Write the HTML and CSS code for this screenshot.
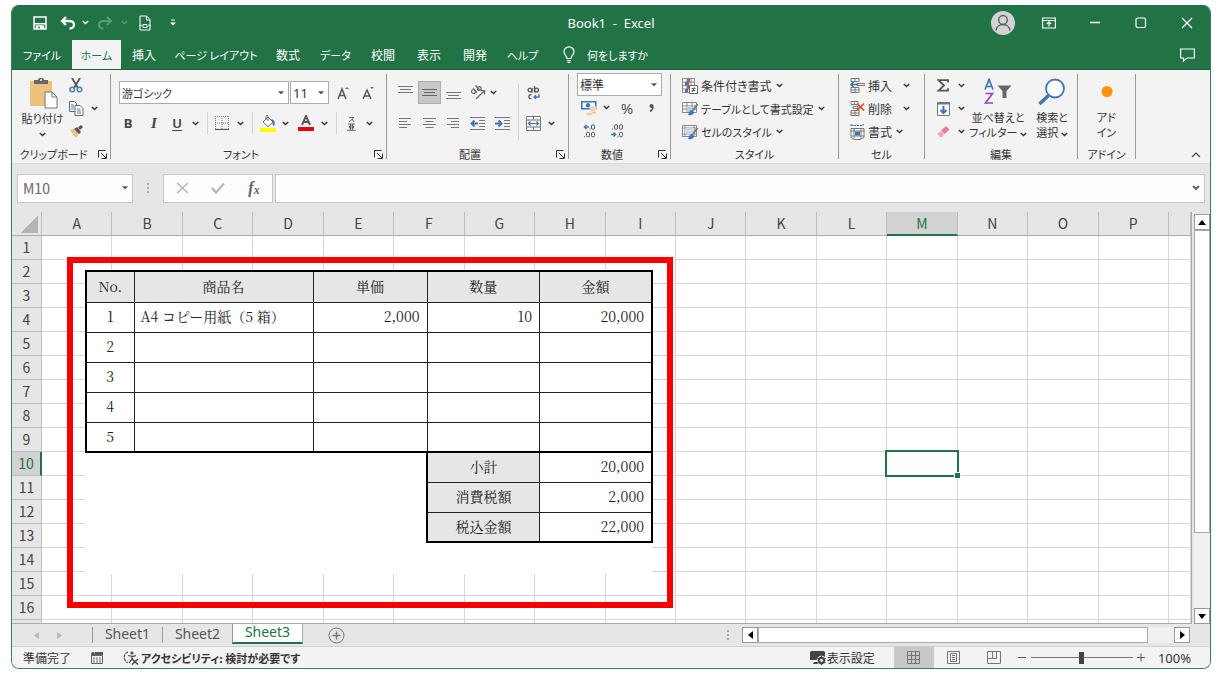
FILE: index.html
```html
<!DOCTYPE html>
<html lang="ja">
<head>
<meta charset="utf-8">
<title>Book1 - Excel</title>
<link rel="stylesheet" href="styles.css">
</head>
<body>
<svg class="defs" aria-hidden="true">
  <symbol id="chev" viewBox="0 0 7 5"><path d="M.8 1l2.7 2.6L6.200 1" fill="none" stroke="currentColor" stroke-width="1.400"/></symbol>
  <symbol id="tri" viewBox="0 0 6 4"><path d="M0 .3h6L3 3.600z" fill="currentColor"/></symbol>
  <symbol id="launch" viewBox="0 0 9 9"><path d="M.5 7.500v-7h7M3 3l5 5M8.500 3.500v5h-5" fill="none" stroke="currentColor"/></symbol>
  <symbol id="dots" viewBox="0 0 4 12"><path d="M1 1h2v2H1zM1 5h2v2H1zM1 9h2v2H1z" fill="currentColor"/></symbol>
</svg>
<div class="window">
  <header class="titlebar">
    <div class="quick">
      <button class="ib" aria-label="上書き保存"><svg width="14" height="14" viewBox="0 0 14 14" fill="none" stroke="#fff" stroke-width="1.500"><path d="M1 1h12v12H1zM1 7.800h12"/><path d="M3.500 13v-3h7v3" fill="#fff"/><path d="M6 10.500v2" stroke="#217346"/></svg></button>
      <button class="ib" aria-label="元に戻す"><svg width="16" height="14" viewBox="0 0 16 14" fill="none" stroke="#fff" stroke-width="2.300"><path d="M6 1L2 5l4 4M2 5h7.500c6 0 6 7.500 0 7.500"/></svg></button>
      <button class="ib" aria-label="元に戻すの一覧"><svg class="chev"><use href="#chev"/></svg></button>
      <button class="ib dim" aria-label="やり直し"><svg width="16" height="14" viewBox="0 0 16 14" fill="none" stroke="currentColor" stroke-width="2"><path d="M10 1l4 4-4 4M14 5H6.500c-6 0-6 7.500 0 7.500"/></svg></button>
      <button class="ib dim" aria-label="やり直しの一覧"><svg class="chev"><use href="#chev"/></svg></button>
      <button class="ib" aria-label="印刷プレビュー"><svg width="12" height="16" viewBox="0 0 12 16" fill="none" stroke="#fff"><path d="M1 9V1h6.500L11 4.500V9M7.500 1v4H11M1 12v3h10v-3"/><path d="M4 9.500h4v3H4z"/><path d="M0 10.500h2.500M9.500 10.500H12" stroke-width="2"/></svg></button>
      <button class="ib" aria-label="クイック アクセスの設定"><svg width="6" height="7" viewBox="0 0 6 7"><path d="M1 1h4" stroke="#fff"/><path d="M0 3.500h6L3 6.500z" fill="#fff"/></svg></button>
    </div>
    <h1 class="doc">Book1&nbsp; - &nbsp;Excel</h1>
    <div class="winctl">
      <button class="ib" aria-label="アカウント"><svg width="24" height="24" viewBox="0 0 24 24"><circle cx="12" cy="12" r="12" fill="#d2d2d2"/><g fill="none" stroke="#555" stroke-width="1.300"><circle cx="12" cy="9" r="4.300"/><path d="M5 19.500c1-8 13-8 14 0"/></g></svg></button>
      <button class="ib" aria-label="リボンの表示オプション"><svg width="14" height="12" viewBox="0 0 14 12" fill="none" stroke="#fff" stroke-width="1.200"><path d="M.6 1h12.800v10H.6zM.6 3.500h12.800M7 9.500V5M4.800 7L7 4.900 9.200 7"/></svg></button>
      <button class="ib" aria-label="最小化"><svg width="10" height="12" viewBox="0 0 10 12"><path d="M0 5.500h10" stroke="#fff" stroke-width="1.300"/></svg></button>
      <button class="ib" aria-label="最大化"><svg width="12" height="12" viewBox="0 0 12 12"><rect x="1" y="1" width="9.500" height="9.500" rx="1.500" fill="none" stroke="#fff" stroke-width="1.200"/></svg></button>
      <button class="ib" aria-label="閉じる"><svg width="12" height="12" viewBox="0 0 12 12"><path d="M1 1l10 10M11 1L1 11" stroke="#fff" stroke-width="1.300"/></svg></button>
    </div>
  </header>

  <nav class="tabs">
    <button class="tab kana w61">ファイル</button>
    <button class="tab kana w49 on">ホーム</button>
    <button class="tab w46">挿入</button>
    <button class="tab kana w98">ページ レイアウト</button>
    <button class="tab w46">数式</button>
    <button class="tab kana w49">データ</button>
    <button class="tab w46">校閲</button>
    <button class="tab w46">表示</button>
    <button class="tab w46">開発</button>
    <button class="tab kana w49">ヘルプ</button>
    <button class="tab kana tell"><svg width="12" height="17" viewBox="0 0 12 17" fill="none" stroke="#fff" stroke-width="1.200"><path d="M4 12.500C4 9.500 1 9 1 5.800a5 5 0 0 1 10 0C11 9 8 9.500 8 12.500zM4 14.500h4M4.500 16.300h3"/></svg>何をしますか</button>
    <button class="ib comment" aria-label="コメント"><svg width="15" height="14" viewBox="0 0 15 14"><path d="M.6 1h13.800v9H7l-3.500 3v-3H.6z" fill="none" stroke="#fff" stroke-width="1.200"/></svg></button>
  </nav>

  <section class="ribbon">
    <div class="group g-clip">
      <div class="body clip">
        <button class="big"><svg width="30" height="32" viewBox="0 0 30 32"><path d="M2 4h22v25H2z" fill="#ecc27c"/><path d="M6 3h4c0-3 6-3 6 0h4v4H6z" fill="#666"/><circle cx="13" cy="3" r="1" fill="#fff"/><path d="M17 15h7l5 5v11H17z" fill="#fff" stroke="#777"/><path d="M24 15v5h5" fill="none" stroke="#777"/></svg><span>貼り付け</span><svg class="chev"><use href="#chev"/></svg></button>
        <div class="stack">
          <button class="ib" aria-label="切り取り"><svg width="14" height="15" viewBox="0 0 14 15" fill="none" stroke-width="1.500"><path d="M3 0l6 10M11 0L5 10" stroke="#555" stroke-width="1.800"/><circle cx="3.200" cy="11.500" r="2.300" stroke="#4a80bd"/><circle cx="10.500" cy="11.500" r="2.300" stroke="#4a80bd"/></svg></button>
          <i></i>
          <button class="ib" aria-label="コピー"><svg width="15" height="15" viewBox="0 0 15 15"><g fill="#fff" stroke="#666"><path d="M.5.500h5l2 2v8h-7z"/><path d="M6 4.500h5l3 3v7H6z"/></g><path d="M2 4h3M2 6h3M2 8h3M8 8h3M8 10h4M8 12h4" stroke="#4a80bd"/></svg></button>
          <button class="ib" aria-label="コピーの一覧"><svg class="chev"><use href="#chev"/></svg></button>
          <button class="ib" aria-label="書式のコピー"><svg width="15" height="13" viewBox="0 0 15 13"><path d="M1 5l4-1 5 5-3 4z" fill="#ecc27c"/><path d="M5 4l3-2 4 5-2 2zM9 2.500L12 0l2 2-3 3" fill="#555"/></svg></button>
        </div>
      </div>
      <div class="cap"><span>クリップボード</span><button class="ib" aria-label="クリップボードの設定"><svg class="launch"><use href="#launch"/></svg></button></div>
    </div>

    <div class="group g-font">
      <div class="body font">
        <div class="row fontrow">
          <label class="sel kana"><select aria-label="フォント"><option>游ゴシック</option></select><svg class="tri"><use href="#tri"/></svg></label>
          <label class="sel num"><select aria-label="フォント サイズ"><option>11</option></select><svg class="tri"><use href="#tri"/></svg></label>
          <button class="ib" aria-label="拡大"><svg width="13" height="14" viewBox="0 0 13 14"><path d="M1 13L5 3l4 10M2.500 9.500h5" fill="none" stroke="#555" stroke-width="1.500"/><path d="M8 3l2-2 2 2z" fill="#3f76b5"/></svg></button>
          <button class="ib" aria-label="縮小"><svg width="13" height="14" viewBox="0 0 13 14"><path d="M1 13L5 4l4 9M2.500 10h5" fill="none" stroke="#555" stroke-width="1.500"/><path d="M8 1h4l-2 2z" fill="#3f76b5"/></svg></button>
        </div>
        <div class="row fmt">
          <button class="ib b">B</button><button class="ib it">I</button><button class="ib u">U</button>
          <button class="ib" aria-label="下線の一覧"><svg class="chev"><use href="#chev"/></svg></button><i class="vs"></i>
          <button class="ib" aria-label="罫線"><svg width="14" height="14" viewBox="0 0 14 14"><path d="M0 .5h14M.5 0v13M13.500 0v13M7 0v13M0 7h14" stroke="#888" stroke-dasharray="1 1"/><path d="M0 13.400h14" stroke="#444"/></svg></button>
          <button class="ib" aria-label="罫線の一覧"><svg class="chev"><use href="#chev"/></svg></button><i class="vs"></i>
          <button class="ib" aria-label="塗りつぶし"><svg width="16" height="17" viewBox="0 0 16 17"><path d="M3 7l5-5 5 5-5 4.500z" fill="#fff" stroke="#666"/><path d="M6 5V1.500c0-1.500 2-1.500 2 0V6" fill="none" stroke="#666"/><path d="M11 4c4 1 4.500 4 3 7-2-1-1-4-3-7z" fill="#3f76b5"/><path d="M0 13h16v4H0z" fill="#ff0"/></svg></button>
          <button class="ib" aria-label="塗りつぶしの一覧"><svg class="chev"><use href="#chev"/></svg></button>
          <button class="ib" aria-label="フォントの色"><svg width="16" height="16" viewBox="0 0 16 16"><path d="M4 10L8 1l4 9M5.500 7h5" fill="none" stroke="#555" stroke-width="1.900"/><path d="M0 12h16v4H0z" fill="#e8000b"/></svg></button>
          <button class="ib" aria-label="フォントの色の一覧"><svg class="chev"><use href="#chev"/></svg></button><i class="vs"></i>
          <button class="ib" aria-label="ふりがな"><svg width="9" height="15" viewBox="0 0 9 15" fill="none" stroke="#666"><path d="M2 1.500h5L2 6M5 3l2 3M1 8h7M2.500 10h4v2h-4zM3.500 8v6M5.500 8v6M0 14.300h9"/></svg></button>
          <button class="ib" aria-label="ふりがなの一覧"><svg class="chev"><use href="#chev"/></svg></button>
        </div>
      </div>
      <div class="cap"><span>フォント</span><button class="ib" aria-label="フォントの設定"><svg class="launch"><use href="#launch"/></svg></button></div>
    </div>

    <div class="group g-align">
      <div class="body align">
        <button class="ib" aria-label="上揃え"><svg width="15" height="18" viewBox="0 0 15 18"><path d="M0 2.500h15M2 5.500h11M0 8.500h15" stroke="#777"/></svg></button>
        <button class="ib pressed" aria-label="上下中央揃え"><svg width="15" height="12" viewBox="0 0 15 12"><path d="M0 2.500h15M2 5.500h11M0 8.500h15" stroke="#666"/></svg></button>
        <button class="ib" aria-label="下揃え"><svg width="15" height="18" viewBox="0 0 15 18"><path d="M0 8.500h15M2 11.500h11M0 14.500h15" stroke="#777"/></svg></button>
        <button class="ib" aria-label="方向"><svg width="16" height="15" viewBox="0 0 16 15" fill="none" stroke="#666" stroke-width="1.200"><circle cx="3.500" cy="6.500" r="2"/><path d="M3 3.500l4 4M5.500.5l4 4.500"/><circle cx="9.300" cy="3.500" r="1.900"/><path d="M6 14l8-8M14.500 9.500V5.500h-4"/></svg></button>
        <button class="ib start" aria-label="方向の一覧"><svg class="chev"><use href="#chev"/></svg></button>
        <i class="vs tall"></i>
        <button class="ib wrap" aria-label="折り返し"><svg width="13" height="14" viewBox="0 0 13 14" fill="none" stroke="#555" stroke-width="1.300"><circle cx="3" cy="4" r="1.900"/><path d="M5 2v4.500M7.500 0v6.500"/><circle cx="9.500" cy="4" r="1.900"/><path d="M4.500 9c-3.500-1.500-3.500 4.500 0 3.500"/><path d="M12 8v3H7M9 9l-2 2 2 2" stroke="#3f76b5"/></svg></button>
        <i></i>
        <button class="ib" aria-label="左揃え"><svg width="12" height="10" viewBox="0 0 12 10"><path d="M0 .5h12M0 3.500h8M0 6.500h12M0 9.500h8" stroke="#777"/></svg></button>
        <button class="ib" aria-label="中央揃え"><svg width="13" height="10" viewBox="0 0 13 10"><path d="M0 .5h13M2.500 3.500h8M0 6.500h13M2.500 9.500h8" stroke="#777"/></svg></button>
        <button class="ib" aria-label="右揃え"><svg width="12" height="10" viewBox="0 0 12 10"><path d="M0 .5h12M4 3.500h8M0 6.500h12M4 9.500h8" stroke="#777"/></svg></button>
        <button class="ib" aria-label="インデント減"><svg width="15" height="13" viewBox="0 0 15 13"><path d="M0 .5h15M9 3.500h6M9 6.500h6M9 9.500h6M0 12.500h15" stroke="#777"/><path d="M8 6.500H2M4.500 3.500l-3 3 3 3" fill="none" stroke="#3f76b5" stroke-width="2"/></svg></button>
        <button class="ib" aria-label="インデント増"><svg width="15" height="13" viewBox="0 0 15 13"><path d="M0 .5h15M9 3.500h6M9 6.500h6M9 9.500h6M0 12.500h15" stroke="#777"/><path d="M0 6.500h6M3.500 3.500l3 3-3 3" fill="none" stroke="#3f76b5" stroke-width="2"/></svg></button>
        <button class="ib" aria-label="セルを結合"><svg width="15" height="15" viewBox="0 0 15 15" fill="none" stroke="#777"><path d="M.5.500h14v14H.5zM.5 4h14M.5 11h14M7.500.500V4M7.500 11v4"/><path d="M2.500 7.500h10M4.500 5.500l-2 2 2 2M10.500 5.500l2 2-2 2" stroke="#3f76b5" stroke-width="1.200"/></svg></button>
        <button class="ib" aria-label="セルを結合の一覧"><svg class="chev"><use href="#chev"/></svg></button>
      </div>
      <div class="cap"><span>配置</span><button class="ib" aria-label="配置の設定"><svg class="launch"><use href="#launch"/></svg></button></div>
    </div>

    <div class="group g-num">
      <div class="body number">
        <label class="sel"><select aria-label="表示形式"><option>標準</option></select><svg class="tri"><use href="#tri"/></svg></label>
        <div class="row numrow">
          <button class="ib" aria-label="通貨"><svg width="16" height="16" viewBox="0 0 16 16"><path d="M.8 1.800h14v7h-14z" fill="#fff" stroke="#3f76b5" stroke-width="1.600"/><circle cx="7" cy="5.300" r="2.200" fill="#3f76b5"/><g fill="#f0c58a" stroke="#fff" stroke-width=".6"><ellipse cx="12" cy="7.500" rx="3.500" ry="1.500"/><ellipse cx="12" cy="10" rx="3.500" ry="1.500"/><ellipse cx="12" cy="12.500" rx="3.500" ry="1.500"/><ellipse cx="8" cy="14" rx="3.500" ry="1.500"/></g></svg></button>
          <button class="ib" aria-label="通貨の一覧"><svg class="chev"><use href="#chev"/></svg></button>
          <button class="ib pct">%</button><button class="ib comma" aria-label="桁区切り"><svg width="5" height="8" viewBox="0 0 5 8"><path d="M4 2.500C4 5 3 6.500 1 7.500" fill="none" stroke="#555" stroke-width="1.500"/><circle cx="2.500" cy="2" r="2" fill="#555"/></svg></button>
        </div>
        <div class="row numrow">
          <button class="ib" aria-label="小数点以下を増やす"><svg width="12" height="14" viewBox="0 0 12 14" fill="none" stroke="#555"><path d="M6 3H1.500M3.500 1L1.500 3l2 2" stroke="#3f76b5" stroke-width="1.500"/><rect x="8.500" y=".8" width="3" height="4.500" rx="1.200"/><rect x="3.500" y="8.300" width="3" height="4.500" rx="1.200"/><rect x="8.500" y="8.300" width="3" height="4.500" rx="1.200"/><path d="M6.500 5h1M1 12.800h1"/></svg></button>
          <i></i>
          <button class="ib start" aria-label="小数点以下を減らす"><svg width="12" height="14" viewBox="0 0 12 14" fill="none" stroke="#555"><path d="M0 10.500h4.500M2.500 8.500l2 2-2 2" stroke="#3f76b5" stroke-width="1.500"/><rect x="3.500" y=".8" width="3" height="4.500" rx="1.200"/><rect x="8.500" y=".8" width="3" height="4.500" rx="1.200"/><rect x="8.500" y="8.300" width="3" height="4.500" rx="1.200"/><path d="M1 5h1M6.500 12.800h1"/></svg></button>
        </div>
      </div>
      <div class="cap"><span>数値</span><button class="ib" aria-label="数値の設定"><svg class="launch"><use href="#launch"/></svg></button></div>
    </div>

    <div class="group g-style">
      <div class="body list">
        <button class="line"><svg width="16" height="16" viewBox="0 0 16 16"><path d="M.5.500h12v14H.5zM.5 4h12M.5 7.500h12M.5 11h12M5 .5v14M9 .5v14" fill="#fff" stroke="#888"/><path d="M5 1h3v3H5zM5 8h4v3H5z" fill="#dd4b39"/><path d="M3 4h4v3.500H3zM3 11h3v3H3z" fill="#3f76b5"/><path d="M7.500 7.500h8v8h-8zM9.500 10.500h4M9.500 12.500h4M12.500 9l-2 5" fill="#fff" stroke="#666"/></svg><span>条件付き書式</span><svg class="chev"><use href="#chev"/></svg></button>
        <button class="line kana"><svg width="16" height="16" viewBox="0 0 16 16"><path d="M.5 1.500h14v10H.5zM.5 5h14M.5 8h14M5 1.500v10M10 1.500v10" fill="#fff" stroke="#888"/><path d="M5 5h5v6H5z" fill="#b9d0ea"/><path d="M15.500 3L11 9.500" stroke="#777" stroke-width="2"/><path d="M6 14c1-1 1-5 4-5l2 2c0 2-2 4-6 3z" fill="#3f76b5"/></svg><span>テーブルとして書式設定</span><svg class="chev"><use href="#chev"/></svg></button>
        <button class="line kana"><svg width="16" height="16" viewBox="0 0 16 16"><path d="M.5 1.500h14v11H.5zM.5 4h14M.5 10h14M3 1.500v11M12 1.500v11" fill="#fff" stroke="#888"/><path d="M3 4h9v6H3z" fill="#c8daee"/><path d="M15.500 4L11 10" stroke="#777" stroke-width="2"/><path d="M6 15c1-1 1-5 4-5l2 2c0 2-2 4-6 3z" fill="#3f76b5"/></svg><span>セルのスタイル</span><svg class="chev"><use href="#chev"/></svg></button>
      </div>
      <div class="cap"><span>スタイル</span></div>
    </div>

    <div class="group g-cell">
      <div class="body list">
        <button class="line wide"><svg width="15" height="15" viewBox="0 0 15 15"><path d="M1 .5h8v3H1zM5 .5v3M1 9.500h8v5H1zM5 9.500v5M1 12h8M7 5.500h8v2H7z" fill="#fff" stroke="#777"/><path d="M8 6.500H1M3.500 4L1 6.500 3.500 9" fill="none" stroke="#3f76b5" stroke-width="1.600"/></svg><span>挿入</span><svg class="chev"><use href="#chev"/></svg></button>
        <button class="line wide"><svg width="15" height="15" viewBox="0 0 15 15"><path d="M1 .5h7v3H1zM4.500.500v3M1 9.500h8v5H1zM5 9.500v5M1 12h8M3 5.500h5v2H3z" fill="#fff" stroke="#777"/><path d="M7 2.500l7 7M14 2.500l-7 7" stroke="#d9472b" stroke-width="1.700"/></svg><span>削除</span><svg class="chev"><use href="#chev"/></svg></button>
        <button class="line"><svg width="15" height="16" viewBox="0 0 15 16"><path d="M1 1.500h12M1 0v3M13 0v3" stroke="#3f76b5" stroke-dasharray="2 1"/><path d="M1 4.500h13v9l-4 2H4l-3-2zM1 7h13M1 12h13M4 4.500v10M11 4.500v10" fill="#fff" stroke="#777"/><path d="M5 7.500h5v4H5z" fill="#3f76b5"/></svg><span>書式</span><svg class="chev"><use href="#chev"/></svg></button>
      </div>
      <div class="cap"><span>セル</span></div>
    </div>

    <div class="group g-edit">
      <div class="body edit">
        <div class="stack">
          <button class="ib" aria-label="合計"><svg width="12" height="13" viewBox="0 0 12 13"><path d="M11 3.500V1.200H1.500L7 6.500l-5.500 5.200H11V9.300" fill="none" stroke="#555" stroke-width="1.800"/></svg></button>
          <button class="ib" aria-label="合計の一覧"><svg class="chev"><use href="#chev"/></svg></button>
          <button class="ib" aria-label="フィル"><svg width="13" height="14" viewBox="0 0 13 14"><path d="M.5.500h12v13H.5z" fill="#fff" stroke="#777"/><path d="M.5 1.500h12" stroke="#777" stroke-width="2"/><path d="M6.500 4v7M3.500 8l3 3 3-3" fill="none" stroke="#3f76b5" stroke-width="2"/></svg></button>
          <button class="ib" aria-label="フィルの一覧"><svg class="chev"><use href="#chev"/></svg></button>
          <button class="ib" aria-label="クリア"><svg width="13" height="13" viewBox="0 0 13 13"><path d="M4 5.500L9 1l3.500 3.500-5 4.800z" fill="#ea7d93"/><path d="M3.500 6L7 9.700 5 12H3L.5 9z" fill="#f2a3b2"/></svg></button>
          <button class="ib" aria-label="クリアの一覧"><svg class="chev"><use href="#chev"/></svg></button>
        </div>
        <button class="big"><svg width="30" height="28" viewBox="0 0 30 28" fill="none" stroke-width="1.700"><path d="M2 11.500L6 1.500l4 10M3.500 8.500h5" stroke="#3f76b5"/><path d="M2.500 15.500h7l-7 9.500h7.500" stroke="#8b4fb3"/><path d="M14.500 7.500h14l-5 5.500V20h-4v-7z" fill="#666"/></svg><span>並べ替えと<br>フィルター <svg class="chev"><use href="#chev"/></svg></span></button>
        <button class="big"><svg width="28" height="28" viewBox="0 0 28 28"><path d="M1.500 26l9-8.500" stroke="#3f76b5" stroke-width="3.500"/><circle cx="17" cy="10.500" r="9" fill="#fff" stroke="#3f76b5" stroke-width="1.800"/></svg><span>検索と<br>選択 <svg class="chev"><use href="#chev"/></svg></span></button>
      </div>
      <div class="cap"><span>編集</span></div>
    </div>

    <div class="group g-addin">
      <div class="body">
        <button class="big"><svg width="28" height="28" viewBox="0 0 28 28"><circle cx="14" cy="13.500" r="5.500" fill="#ff9200"/></svg><span>アド<br>イン</span></button>
      </div>
      <div class="cap"><span>アドイン</span></div>
    </div>
    <button class="ib collapse" aria-label="リボンを折りたたむ"><svg width="10" height="6" viewBox="0 0 10 6"><path d="M1 5l4-4 4 4" fill="none" stroke="#444" stroke-width="1.200"/></svg></button>
  </section>

  <div class="formula">
    <label class="namebox"><input aria-label="名前ボックス" value="M10"><svg class="tri"><use href="#tri"/></svg></label>
    <svg class="dots"><use href="#dots"/></svg>
    <div class="fx">
      <button class="ib" aria-label="キャンセル"><svg width="13" height="12" viewBox="0 0 13 12"><path d="M1 1l11 10M12 1L1 11" stroke="#b5b5b5" stroke-width="1.500"/></svg></button>
      <button class="ib" aria-label="入力"><svg width="14" height="12" viewBox="0 0 14 12"><path d="M1 6l4 4.500L13 1.500" fill="none" stroke="#b5b5b5" stroke-width="2.200"/></svg></button>
      <button class="ib fxb" aria-label="関数の挿入"><em>f</em><small>x</small></button>
    </div>
    <label class="fbox"><input aria-label="数式バー"><svg width="8" height="6" viewBox="0 0 8 6"><path d="M1 1l3 3 3-3" fill="none" stroke="#666" stroke-width="2"/></svg></label>
  </div>

  <main class="sheet">
    <div class="view">
      <table class="grid">
        <colgroup id="cols"></colgroup>
        <thead id="head"></thead>
        <tbody id="rows"></tbody>
      </table>
      <div class="invoice">
        <table>
          <colgroup><col class="c-no"><col class="c-name"><col class="c-price"><col><col></colgroup>
          <tbody class="items">
            <tr class="top"><th>No.</th><th>商品名</th><th>単価</th><th>数量</th><th>金額</th></tr>
            <tr><td class="mid">1</td><td class="name">A4 コピー用紙（5 箱）</td><td>2,000</td><td>10</td><td>20,000</td></tr>
            <tr><td class="mid">2</td><td></td><td></td><td></td><td></td></tr>
            <tr><td class="mid">3</td><td></td><td></td><td></td><td></td></tr>
            <tr><td class="mid">4</td><td></td><td></td><td></td><td></td></tr>
            <tr><td class="mid">5</td><td></td><td></td><td></td><td></td></tr>
          </tbody>
          <tbody class="totals">
            <tr><td class="blank" colspan="3"></td><th>小計</th><td>20,000</td></tr>
            <tr><td class="blank" colspan="3"></td><th>消費税額</th><td>2,000</td></tr>
            <tr><td class="blank" colspan="3"></td><th>税込金額</th><td>22,000</td></tr>
          </tbody>
        </table>
      </div>
      <div class="frame"></div>
    </div>
    <div class="vscroll">
      <button class="sb" aria-label="上へ"><svg width="8" height="5" viewBox="0 0 8 5"><path d="M0 5l4-5 4 5z"/></svg></button>
      <div class="thumb"></div>
      <div class="rest"></div>
      <button class="sb" aria-label="下へ"><svg width="8" height="5" viewBox="0 0 8 5"><path d="M0 0l4 5 4-5z"/></svg></button>
    </div>
  </main>

  <div class="sheetbar">
    <div class="arrows">
      <button class="ib" aria-label="前のシート"><svg width="5" height="7" viewBox="0 0 5 7"><path d="M5 0v7L0 3.500z" fill="#bbb"/></svg></button>
      <button class="ib" aria-label="次のシート"><svg width="5" height="7" viewBox="0 0 5 7"><path d="M0 0v7l5-3.500z" fill="#bbb"/></svg></button>
    </div>
    <button class="stab">Sheet1</button><button class="stab">Sheet2</button><button class="stab cur">Sheet3</button>
    <button class="ib add" aria-label="新しいシート"><svg width="17" height="17" viewBox="0 0 17 17" fill="none" stroke="#777"><circle cx="8.500" cy="8.500" r="7.500"/><path d="M8.500 4.500v8M4.500 8.500h8" stroke-width="1.500"/></svg></button>
    <svg class="dots"><use href="#dots"/></svg>
    <div class="hscroll">
      <button class="sb" aria-label="左へ"><svg width="5" height="8" viewBox="0 0 5 8"><path d="M5 0v8L0 4z"/></svg></button>
      <div class="thumb"></div>
      <div class="rest"></div>
      <button class="sb" aria-label="右へ"><svg width="5" height="8" viewBox="0 0 5 8"><path d="M0 0v8l5-4z"/></svg></button>
    </div>
  </div>

  <footer class="status">
    <span class="ready">準備完了</span>
    <svg class="macro" width="12" height="12" viewBox="0 0 12 12"><path d="M.5 3.500h11v8H.5z" fill="none" stroke="#666"/><path d="M4 1.500h8" stroke="#555" stroke-width="3"/><circle cx="2" cy="2" r="2" fill="#555"/><path d="M2 6h8M2 8h8M2 10h8" stroke="#777" stroke-dasharray="2 1"/></svg>
    <button class="acc"><svg width="16" height="14" viewBox="0 0 16 14" fill="none" stroke="#444" stroke-width="1.200"><path d="M5 1C0 2.500 0 10 5 11.500" stroke-dasharray="3 1"/><circle cx="9" cy="2" r="1"/><path d="M5 4.500c3 1 6 1 8 0M9 5v3l-3 4M9 7l1 1.500"/><path d="M9 8l6 5.500M15 8l-6 5.500" stroke-width="1.500"/></svg>アクセシビリティ: 検討が必要です</button>
    <button class="disp"><svg width="16" height="14" viewBox="0 0 16 14"><path d="M0 1.500Q0 0 1.500 0h12Q15 0 15 1.500V9H0zM4 11h4v2H3z" fill="#444"/><circle cx="11.500" cy="9.500" r="4.800" fill="#f3f3f3"/><circle cx="11.500" cy="9.500" r="2.800" fill="none" stroke="#444" stroke-width="1.800"/><path d="M11.500 5v9M7.500 7.200l8 4.600M15.500 7.200l-8 4.600" stroke="#444" stroke-width="1.300"/><circle cx="11.500" cy="9.500" r="1.400" fill="#f3f3f3"/></svg>表示設定</button>
    <button class="ib vb sel-view" aria-label="標準"><svg width="13" height="13" viewBox="0 0 13 13"><path d="M.5.500h12v12H.5zM.5 4.500h12M.5 8.500h12M4.500.500v12M8.500.500v12" fill="none" stroke="#777"/></svg></button>
    <button class="ib vb" aria-label="ページ レイアウト表示"><svg width="13" height="13" viewBox="0 0 13 13" fill="none" stroke="#777"><path d="M.5.500h12v12H.5zM3.500 2.500h6v8h-6zM5 4.500h3M5 6.500h3M5 8.500h3"/></svg></button>
    <button class="ib vb" aria-label="改ページ プレビュー"><svg width="14" height="13" viewBox="0 0 14 13" fill="none" stroke="#777"><path d="M.5.500h13v12H.5zM.5 7.500h9v-7M5.500.500v7"/></svg></button>
    <button class="ib zb" aria-label="縮小表示"><svg width="8" height="9" viewBox="0 0 8 9"><path d="M0 4.500h8" stroke="#555"/></svg></button>
    <input class="zoom" type="range" min="0" max="100" value="50" aria-label="ズーム">
    <button class="ib zb" aria-label="拡大表示"><svg width="8" height="9" viewBox="0 0 8 9"><path d="M0 4.500h8M4 .5v8" stroke="#555"/></svg></button>
    <button class="pctz">100%</button>
  </footer>
</div>
<script src="script.js"></script>
</body>
</html>
```

FILE: styles.css
```css
* { box-sizing: border-box; }
body { margin: 0; background: #fff; color: #333; font: 12px/16px "Noto Sans CJK JP", sans-serif; font-feature-settings: "palt"; }
button, input, select { font: inherit; color: inherit; font-feature-settings: inherit; margin: 0; padding: 0; border: 0; background: none; }
button { white-space: nowrap; }
svg { display: block; flex: none; }
.defs { position: absolute; width: 0; height: 0; }
.window { margin: 5px 10px 0 11px; height: calc(100vh - 16px); display: flex; flex-direction: column; border: 1px solid #3f7f5f; border-top: 0; border-radius: 8px; overflow: hidden; background: #e6e6e6; }
.window > * { flex: none; }
.ib { display: flex; align-items: center; justify-content: center; }
.chev { width: 7px; height: 5px; }
.tri { width: 6px; height: 4px; color: #555; }
.launch { width: 9px; height: 9px; }
.dots { width: 4px; height: 12px; color: #aaa; }
.kana { font-size: 11px; }

/* title bar and ribbon tabs */
.titlebar { height: 35px; background: #217346; color: #fff; display: grid; grid-template-columns: 1fr auto 1fr; align-items: center; }
.quick { display: grid; grid-template-columns: 30px 26px 8px 32px 6px 36px 20px; padding-left: 13px; }
.dim { color: #5b9a78; }
.doc { margin: 0; font: 13px/18px "Noto Sans", sans-serif; }
.winctl { display: grid; grid-template-columns: repeat(5, 46px); justify-content: end; }
.tabs { height: 30px; background: #217346; color: #fff; display: flex; border-bottom: 1px solid #1b6139; }
.tab { display: flex; align-items: center; justify-content: center; }
.w61 { width: 60px; }
.w49 { width: 49px; }
.w46 { width: 46px; }
.w98 { width: 98px; }
.on { background: #f3f3f3; color: #217346; }
.tell { gap: 12px; padding-left: 16px; }
.comment { width: 46px; margin-left: auto; }

/* ribbon */
.ribbon { height: 94px; background: #f3f3f3; display: flex; border-bottom: 1px solid #dadada; padding: 4px 0; }
.group { display: flex; flex-direction: column; border-right: 1px solid #9a9a9a; }
.g-clip { width: 99px; }
.g-font { width: 276px; }
.g-align { width: 182px; }
.g-num { width: 102px; }
.g-style { width: 168px; }
.g-cell { width: 86px; }
.g-edit { width: 153px; }
.g-addin { width: 58px; }
.body { flex: 1; }
.cap { display: flex; height: 10px; align-items: center; text-align: center; font-size: 11px; }
.cap span { flex: 1; white-space: nowrap; }
.cap .ib { width: 15px; height: 10px; }
.clip, .edit { display: flex; align-items: flex-start; }
.big { display: flex; flex-direction: column; align-items: center; gap: 4px; line-height: 15px; padding-top: 4px; font-size: 11px; }
.big span .chev { display: inline-block; vertical-align: middle; }
.clip .big { width: 52px; padding: 3px 0 0 9px; gap: 2px; }
.clip .big > .chev { margin-top: 4px; }
.stack { display: grid; grid-auto-rows: 23px; grid-template-columns: 24px 12px; }
.edit .stack { padding-left: 6px; }
.edit .big { width: 46px; }
.edit .stack + .big { width: 62px; }
.g-addin .big { width: 100%; }
.row { display: grid; align-items: center; }
.font { padding: 7px 0 0 8px; }
.fontrow { grid-template-columns: 170px 39px 26px 22px; column-gap: 1px; }
.sel { position: relative; display: block; height: 23px; border: 1px solid #ababab; background: #fff; }
.sel select { appearance: none; width: 100%; height: 21px; padding-left: 2px; display: block; }
.num select { font-family: "Noto Sans", sans-serif; font-size: 13px; }
.sel .tri, .namebox .tri { position: absolute; right: 4px; top: 50%; margin-top: -2px; pointer-events: none; }
.fmt { grid-template-columns: 26px 26px 20px 16px 8px 22px 14px 10px 22px 12px 30px 6px 18px 12px 24px; justify-items: center; justify-content: start; height: 38px; margin-left: -4px; }
.fmt > .ib { height: 22px; }
.b, .it, .u { font: bold 13px/18px "Noto Sans", sans-serif; color: #444; }
.it { font: italic bold 15px/18px "Liberation Serif", serif; }
.u { text-decoration: underline; font-weight: 600; text-underline-offset: 2px; }
.vs { width: 1px; height: 22px; background: #d5d5d5; }
.align { display: grid; grid-template-columns: 24px 24px 24px 25px 24px 8px 22px 14px; grid-template-rows: 23px 38px; align-items: center; justify-items: center; align-content: start; padding: 7px 0 0 6px; }
.start { justify-self: start; }
.pressed { width: 23px; height: 23px; background: #c8c8c8; border: 1px solid #ababab; }
.tall { grid-row: 1 / 3; grid-column: 6; height: 56px; }
.wrap { grid-column: 7; }
.number { padding-left: 8px; }
.number .sel { width: 85px; margin-top: -1px; }
.numrow { grid-template-columns: 24px 10px 32px 16px; height: 23px; }
.pct { font: 15px/20px "Noto Sans", sans-serif; color: #555; }
.list { display: flex; flex-direction: column; padding: 0 0 0 11px; }
.line { display: flex; align-items: center; gap: 3px; height: 23px; }
.line .chev { margin-left: 1px; }
.wide .chev { margin-left: 8px; }
.collapse { margin-left: auto; align-self: flex-end; width: 28px; height: 8px; }

/* formula bar */
.formula { height: 48px; display: flex; align-items: center; padding: 0 5px; }
.namebox, .fx, .fbox { height: 29px; background: #fdfdfd; border: 1px solid #c6c6c6; display: flex; align-items: center; }
.namebox { position: relative; width: 116px; }
.namebox input { width: 90px; padding-left: 5px; font-size: 14px; color: #666; }
.formula .dots { margin: 0 13px; }
.fx { width: 110px; display: grid; grid-template-columns: repeat(3, 36px); }
.fxb { font: bold 16px/20px "Liberation Serif", serif; color: #666; }
.fxb small { font-size: 12px; font-style: italic; padding-top: 3px; }
.fbox { flex: 1; margin-left: 2px; padding-right: 4px; }
.fbox input { flex: 1; }

/* worksheet */
.window > .sheet { flex: 1; min-height: 0; display: flex; }
.view { position: relative; flex: 1; overflow: hidden; border-bottom: 1px solid #ababab; }
.grid { width: 100%; table-layout: fixed; border-collapse: separate; border-spacing: 0; font-size: 14px; line-height: 20px; color: #444; background: #fff; }
.grid th, .grid td { height: 24px; padding: 0 0 2px; font-weight: 400; border-right: 1px solid #d6d6d6; border-bottom: 1px solid #d6d6d6; }
.grid .rh { width: 30px; }
.grid .tail { width: 22px; }
.grid th { background: #e6e6e6; border-color: #bdbdbd; }
.grid thead th { border-bottom-color: #ababab; }
.grid thead th.hot, .grid tbody th.hot { background: #d2d2d2; color: #217346; }
.grid thead th.hot { border-bottom: 2px solid #217346; padding-bottom: 1px; }
.grid tbody th.hot { border-right: 2px solid #217346; }
.grid .corner { background: linear-gradient(to bottom right, transparent 50%, #b4b4b4 50%) 8px 4px / 18px 17px no-repeat #e6e6e6; }
.active { position: relative; }
.active::before { content: ""; position: absolute; inset: -2px; border: 2px solid #217346; }
.active::after { content: ""; position: absolute; right: -3px; bottom: -3px; width: 5px; height: 5px; background: #217346; outline: 1px solid #fff; }
.invoice { position: absolute; left: 73px; top: 58px; width: 568px; height: 304px; background: #fff; color: #222; }
.invoice table { width: 100%; table-layout: fixed; border-collapse: collapse; font: 14px/20px "Noto Serif CJK JP", "Liberation Serif", "Noto Sans CJK JP", serif; font-feature-settings: normal; }
.c-no { width: 48px; }
.c-name { width: 179px; }
.c-price { width: 114px; }
.invoice th, .invoice td { height: 30px; padding: 0 7px 2px; border: 1px solid #222; font-weight: 400; text-align: right; white-space: nowrap; }
.invoice .top th { height: 31px; }
.invoice th { background: #e6e6e6; text-align: center; }
.invoice .mid { text-align: center; }
.invoice .name { text-align: left; padding-left: 6px; }
.invoice .items { border: 2px solid #000; }
.invoice .blank { border: 0; }
.invoice .totals th { border-left: 2px solid #000; }
.invoice .totals td:last-child { border-right: 2px solid #000; }
.invoice .totals tr:last-child th, .invoice .totals tr:last-child td:last-child { border-bottom: 2px solid #000; }
.frame { position: absolute; left: 55px; top: 45px; width: 606px; height: 351px; border: 6px solid #fb0000; pointer-events: none; }
.vscroll { width: 19px; display: flex; flex-direction: column; padding: 2px 2px 0; border-left: 1px solid #ababab; }
.sb { width: 16px; height: 16px; border: 1px solid #999; background: #fff; display: flex; align-items: center; justify-content: center; flex: none; }
.thumb { background: #fff; border: 1px solid #ababab; }
.rest { background: #f0f0f0; }
.vscroll .thumb { flex: 304; width: 16px; }
.vscroll .rest { flex: 76; width: 16px; }

/* sheet tabs and status bar */
.sheetbar { height: 23px; display: flex; align-items: center; border-bottom: 1px solid #d0d0d0; padding-right: 20px; }
.arrows { width: 80px; display: flex; gap: 18px; padding-left: 22px; }
.stab { width: 70px; height: 16px; border-left: 1px solid #999; font: 14px/14px "Noto Sans", sans-serif; color: #555; padding-bottom: 4px; }
.stab.cur { width: 71px; height: 20px; align-self: flex-start; background: #fff; color: #217346; border-right: 1px solid #ababab; border-bottom: 2px solid #217346; padding-bottom: 2px; }
.add { margin-left: 25px; }
.sheetbar > .dots { margin-left: auto; margin-right: 12px; }
.hscroll { width: 448px; display: flex; }
.hscroll .thumb { flex: 391; height: 16px; }
.hscroll .rest { flex: 26; height: 16px; }
.status { height: 21px; background: #f3f3f3; display: flex; align-items: center; padding: 0 19px 0 11px; }
.macro { margin: 0 20px; }
.acc, .disp { display: flex; align-items: center; gap: 2px; font-size: 11px; font-weight: 700; }
.disp { margin-left: auto; margin-right: 19px; font-size: 12px; font-weight: 400; gap: 1px; }
.vb { width: 40px; height: 21px; }
.sel-view { background: #c8c8c8; }
.zb { width: 17px; }
.zoom { appearance: none; width: 102px; height: 13px; background: linear-gradient(#777, #777) center / 100% 1px no-repeat; }
.zoom::-webkit-slider-thumb { appearance: none; width: 5px; height: 12px; background: #444; }
.pctz { margin-left: 8px; font: 13px/16px "Noto Sans", sans-serif; }
```

FILE: script.js
```js
const letters = "ABCDEFGHIJKLMNOP".split("");
const active = { col: "M", row: 10 };

document.getElementById("cols").innerHTML =
  '<col class="rh">' + letters.map(() => "<col>").join("") + '<col class="tail">';

document.getElementById("head").innerHTML =
  '<tr><th class="corner"></th>' +
  letters.map(c => `<th${c === active.col ? ' class="hot"' : ""}>${c}</th>`).join("") +
  "<th></th></tr>";

let html = "";
for (let r = 1; r <= 17; r++) {
  html += `<tr><th${r === active.row ? ' class="hot"' : ""}>${r <= 16 ? r : ""}</th>`;
  for (const c of letters) {
    html += c === active.col && r === active.row ? '<td class="active"></td>' : "<td></td>";
  }
  html += "<td></td></tr>";
}
document.getElementById("rows").innerHTML = html;
```
